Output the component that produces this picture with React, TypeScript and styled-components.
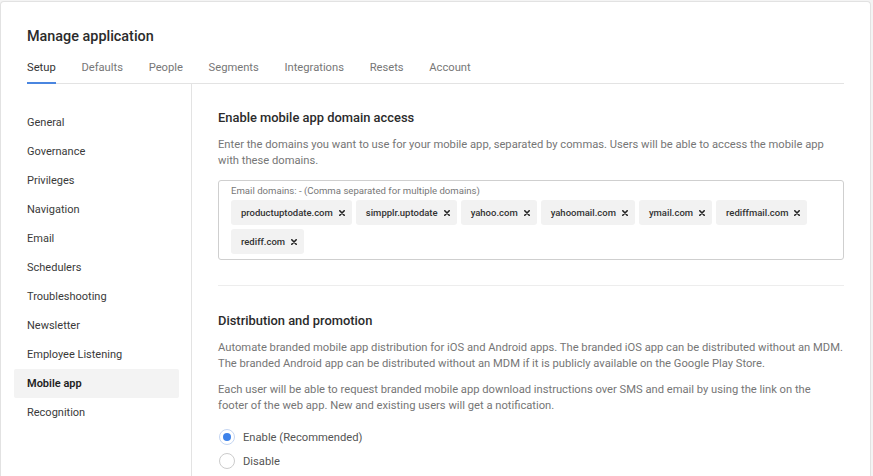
import styled, { createGlobalStyle } from 'styled-components';

const GlobalStyle = createGlobalStyle`
  html, body {
    margin: 0;
    padding: 0;
    background: #f4f4f4;
  }
  body {
    font-family: Roboto, "Liberation Sans", Arial, sans-serif;
    color: #333333;
    -webkit-font-smoothing: antialiased;
  }
`;

const tabs = ['Setup', 'Defaults', 'People', 'Segments', 'Integrations', 'Resets', 'Account'];

const menu = [
  'General',
  'Governance',
  'Privileges',
  'Navigation',
  'Email',
  'Schedulers',
  'Troubleshooting',
  'Newsletter',
  'Employee Listening',
  'Mobile app',
  'Recognition',
];

const domains = [
  'productuptodate.com',
  'simpplr.uptodate',
  'yahoo.com',
  'yahoomail.com',
  'ymail.com',
  'rediffmail.com',
  'rediff.com',
];

const CloseIcon = () => (
  <svg width="6" height="6" viewBox="0 0 6 6" aria-hidden="true">
    <path d="M0.8 0.8 L5.2 5.2 M5.2 0.8 L0.8 5.2" stroke="#222" strokeWidth="1.6" strokeLinecap="round" />
  </svg>
);

const App = () => {
  return (
    <>
      <GlobalStyle />
      <Card>
        <Header>
          <Title>Manage application</Title>
          <TabBar>
            {tabs.map((tab) => (
              <Tab key={tab} $active={tab === 'Setup'}>
                {tab}
              </Tab>
            ))}
          </TabBar>
        </Header>
        <Body>
          <Sidebar>
            {menu.map((item) => (
              <MenuItem key={item} $active={item === 'Mobile app'}>
                {item}
              </MenuItem>
            ))}
          </Sidebar>
          <Content>
            <Section>
              <SectionTitle>Enable mobile app domain access</SectionTitle>
              <Paragraph>
                Enter the domains you want to use for your mobile app, separated by commas. Users will be able to
                access the mobile app with these domains.
              </Paragraph>
              <DomainBox>
                <FieldLabel>Email domains: - (Comma separated for multiple domains)</FieldLabel>
                <ChipList>
                  {domains.map((d) => (
                    <Chip key={d}>
                      {d}
                      <CloseIcon />
                    </Chip>
                  ))}
                </ChipList>
              </DomainBox>
            </Section>
            <Divider />
            <Section>
              <SectionTitle>Distribution and promotion</SectionTitle>
              <Paragraph>
                Automate branded mobile app distribution for iOS and Android apps. The branded iOS app can be
                distributed without an MDM. The branded Android app can be distributed without an MDM if it is
                publicly available on the Google Play Store.
              </Paragraph>
              <Paragraph $gap $narrow>
                Each user will be able to request branded mobile app download instructions over SMS and email by using
                the link on the footer of the web app. New and existing users will get a notification.
              </Paragraph>
              <RadioGroup>
                <RadioRow>
                  <Radio $checked />
                  Enable (Recommended)
                </RadioRow>
                <RadioRow>
                  <Radio />
                  Disable
                </RadioRow>
              </RadioGroup>
            </Section>
          </Content>
        </Body>
      </Card>
    </>
  );
};

const Card = styled.div`
  margin: 1px 2px 0 0;
  min-height: calc(100vh - 1px);
  background: #ffffff;
  border: 1px solid #e2e2e2;
  border-bottom: none;
  border-radius: 4px 4px 0 0;
  box-sizing: border-box;
  display: flex;
  flex-direction: column;
`;

const Header = styled.div`
  padding: 0 26px 0 26px;
`;

const Title = styled.h1`
  margin: 0;
  padding-top: 25px;
  font-size: 14.4px;
  line-height: 20px;
  font-weight: 500;
  color: #2b2b2b;
`;

const TabBar = styled.div`
  display: flex;
  gap: 25.7px;
  margin-top: 10px;
  border-bottom: 1px solid #e3e3e3;
`;

const Tab = styled.div<{ $active?: boolean }>`
  font-size: 11.2px;
  line-height: 14px;
  padding: 4px 0 7px;
  margin-bottom: -1px;
  color: ${(p) => (p.$active ? '#333333' : '#777777')};
  border-bottom: 2px solid ${(p) => (p.$active ? '#4a86e0' : 'transparent')};
`;

const Body = styled.div`
  flex: 1;
  display: flex;
`;

const Sidebar = styled.nav`
  width: 191px;
  flex-shrink: 0;
  box-sizing: border-box;
  padding: 24px 12px 0 13px;
  border-right: 1px solid #e3e3e3;
  display: flex;
  flex-direction: column;
`;

const MenuItem = styled.div<{ $active?: boolean }>`
  height: 29px;
  display: flex;
  align-items: center;
  padding-left: 13px;
  font-size: 11px;
  font-weight: ${(p) => (p.$active ? 600 : 400)};
  color: ${(p) => (p.$active ? '#1e1e1e' : '#3a3a3a')};
  background: ${(p) => (p.$active ? '#f3f3f3' : 'transparent')};
  border-radius: 2px;
`;

const Content = styled.main`
  flex: 1;
  padding: 26px 26px 0 26px;
`;

const Section = styled.section`
  display: flex;
  flex-direction: column;
`;

const SectionTitle = styled.h2`
  margin: 0 0 11px;
  font-size: 12.9px;
  line-height: 16px;
  font-weight: 500;
  color: #2b2b2b;
`;

const Paragraph = styled.p<{ $gap?: boolean; $narrow?: boolean }>`
  margin: ${(p) => (p.$gap ? '10px 0 0' : '0')};
  max-width: ${(p) => (p.$narrow ? '605px' : 'none')};
  font-size: 11.2px;
  line-height: 16px;
  color: #767676;
`;

const DomainBox = styled.div`
  margin-top: 11px;
  border: 1px solid #cfcfcf;
  border-radius: 3px;
  padding: 4px 12px 4px;
  min-height: 70px;
`;

const FieldLabel = styled.div`
  font-size: 9.6px;
  line-height: 12px;
  color: #777777;
`;

const ChipList = styled.div`
  margin-top: 3px;
  display: flex;
  flex-wrap: wrap;
  gap: 4px;
`;

const Chip = styled.span`
  height: 25px;
  display: inline-flex;
  align-items: center;
  gap: 6px;
  padding: 0 7px 0 10px;
  background: #f2f2f2;
  border-radius: 3px;
  font-size: 9.5px;
  font-weight: 500;
  color: #333333;
`;

const Divider = styled.hr`
  margin: 25px 0 27px;
  border: none;
  border-top: 1px solid #ededed;
`;

const RadioGroup = styled.div`
  margin-top: 11px;
  display: flex;
  flex-direction: column;
`;

const RadioRow = styled.label`
  height: 24px;
  display: flex;
  align-items: center;
  gap: 8px;
  padding-left: 1px;
  font-size: 11.2px;
  color: #555555;
`;

const Radio = styled.span<{ $checked?: boolean }>`
  width: 16px;
  height: 16px;
  border-radius: 50%;
  border: 1px solid ${(p) => (p.$checked ? '#c5d6f2' : '#cccccc')};
  box-sizing: border-box;
  display: inline-flex;
  align-items: center;
  justify-content: center;
  background: #ffffff;

  &::after {
    content: '';
    width: 8px;
    height: 8px;
    border-radius: 50%;
    background: ${(p) => (p.$checked ? '#3d82ea' : 'transparent')};
  }
`;

export default App;
